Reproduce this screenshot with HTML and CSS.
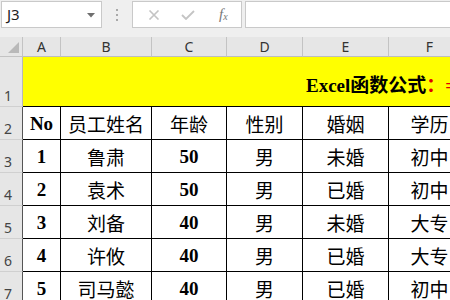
FILE: index.html
```html
<!DOCTYPE html>
<html>
<head>
<meta charset="utf-8">
<link rel="stylesheet" href="styles.css">
</head>
<body>
<div class="app">
  <div class="toolbar">
    <div class="namebox">
      <span class="ref">J3</span>
      <svg class="dd" width="8" height="5" viewBox="0 0 8 5"><path d="M0 0H8L4 4.5Z" fill="#6f6f6f"/></svg>
    </div>
    <div class="sep"><i></i><i></i><i></i></div>
    <div class="fxbtns">
      <svg class="ic" width="12" height="10" viewBox="0 0 12 10"><path d="M1.5 0.5L10.5 9.5M10.5 0.5L1.5 9.5" stroke="#c4c4c4" stroke-width="1.6" fill="none"/></svg>
      <svg class="ic" width="14" height="10" viewBox="0 0 14 10"><path d="M1 5L5 9L13 1" stroke="#c4c4c4" stroke-width="1.8" fill="none"/></svg>
      <span class="fx">f<sub>x</sub></span>
    </div>
    <div class="formula"></div>
  </div>
  <div class="sheet">
    <div class="row hdr">
      <div class="corner"><svg width="11" height="11" viewBox="0 0 11 11"><path d="M11 0V11H0Z" fill="#b9b9b9"/></svg></div>
      <div class="ch">A</div><div class="ch">B</div><div class="ch">C</div><div class="ch">D</div><div class="ch">E</div><div class="ch">F</div>
    </div>
    <div class="row r1">
      <div class="rh">1</div>
      <div class="title">Excel函数公式<span class="red">：=</span></div>
    </div>
    <div class="row dr">
      <div class="rh">2</div>
      <div class="c b">No</div><div class="c">员工姓名</div><div class="c">年龄</div><div class="c">性别</div><div class="c">婚姻</div><div class="c">学历</div>
    </div>
    <div class="row dr">
      <div class="rh">3</div>
      <div class="c b">1</div><div class="c">鲁肃</div><div class="c b">50</div><div class="c">男</div><div class="c">未婚</div><div class="c">初中</div>
    </div>
    <div class="row dr">
      <div class="rh">4</div>
      <div class="c b">2</div><div class="c">袁术</div><div class="c b">50</div><div class="c">男</div><div class="c">已婚</div><div class="c">初中</div>
    </div>
    <div class="row dr">
      <div class="rh">5</div>
      <div class="c b">3</div><div class="c">刘备</div><div class="c b">40</div><div class="c">男</div><div class="c">未婚</div><div class="c">大专</div>
    </div>
    <div class="row dr">
      <div class="rh">6</div>
      <div class="c b">4</div><div class="c">许攸</div><div class="c b">40</div><div class="c">男</div><div class="c">已婚</div><div class="c">大专</div>
    </div>
    <div class="row dr">
      <div class="rh">7</div>
      <div class="c b">5</div><div class="c">司马懿</div><div class="c b">40</div><div class="c">男</div><div class="c">已婚</div><div class="c">初中</div>
    </div>
  </div>
</div>
</body>
</html>
```

FILE: styles.css
```css
* { box-sizing: border-box; }
html, body { margin: 0; padding: 0; }
body { width: 450px; height: 300px; overflow: hidden; background: #fff; font-family: "Noto Sans", "Noto Sans CJK SC", sans-serif; }
.app { width: 450px; height: 300px; overflow: hidden; }

.toolbar { display: flex; align-items: flex-start; height: 37px; background: #efefef; padding: 1px 0 0 1px; }
.namebox { width: 101px; height: 27px; background: #fff; border: 1px solid #c9c9c9; display: flex; align-items: center; justify-content: space-between; padding: 0 6px 0 5px; }
.ref { font-size: 15px; color: #1e1e1e; line-height: 1; }
.dd { margin-top: 1px; }
.sep { width: 30px; height: 27px; display: flex; flex-direction: column; align-items: center; justify-content: center; gap: 3px; }
.sep i { display: block; width: 2px; height: 2px; background: #a9a9a9; }
.fxbtns { width: 110px; height: 27px; background: #fff; border: 1px solid #c9c9c9; display: flex; align-items: center; padding: 0 0 0 15px; gap: 0; }
.fxbtns .ic:first-child { margin-right: 21px; }
.fxbtns .ic:nth-child(2) { margin-right: 24px; }
.fx { font-family: "Liberation Serif", serif; font-style: italic; font-size: 15px; color: #777; line-height: 1; }
.fx sub { font-size: 10px; vertical-align: -1px; }
.formula { flex: 1; margin-left: 3px; height: 27px; background: #fff; border: 1px solid #c9c9c9; border-right: none; }

.row { display: grid; grid-template-columns: 23px 38px 91px 75px 76px 86px 82px; }
.hdr { height: 20px; background: #e6e6e6; }
.corner { border-right: 1px solid #c3c3c3; border-bottom: 1px solid #c3c3c3; display: flex; align-items: flex-end; justify-content: flex-end; padding: 0 3px 3px 0; }
.ch { border-right: 1px solid #c3c3c3; border-bottom: 1px solid #bdbdbd; font-size: 14px; color: #333; text-align: center; line-height: 19px; }

.rh { background: #e6e6e6; border-right: 1px solid #b8b8b8; border-bottom: 1px solid #d0d0d0; font-size: 14px; color: #444; display: flex; align-items: flex-end; padding: 0 0 1px 4px; line-height: 1.2; }
.r1 { height: 50px; }
.title { grid-column: 2 / -1; background: #ffff00; border-bottom: 1px solid #000; font-family: "Liberation Serif", "Noto Sans CJK SC", serif; font-weight: bold; font-size: 19px; color: #000; display: flex; align-items: center; padding: 4px 0 0 283px; white-space: nowrap; }
.red { color: #e00000; }

.dr { height: 33px; }
.dr .rh { border-right-color: #555; }
.c { border-right: 1px solid #000; border-bottom: 1px solid #000; display: flex; align-items: center; justify-content: center; font-family: "Liberation Serif", "Noto Sans CJK SC", serif; font-size: 19px; color: #000; white-space: nowrap; padding-top: 1px; }
.c.b { font-weight: bold; }
```
